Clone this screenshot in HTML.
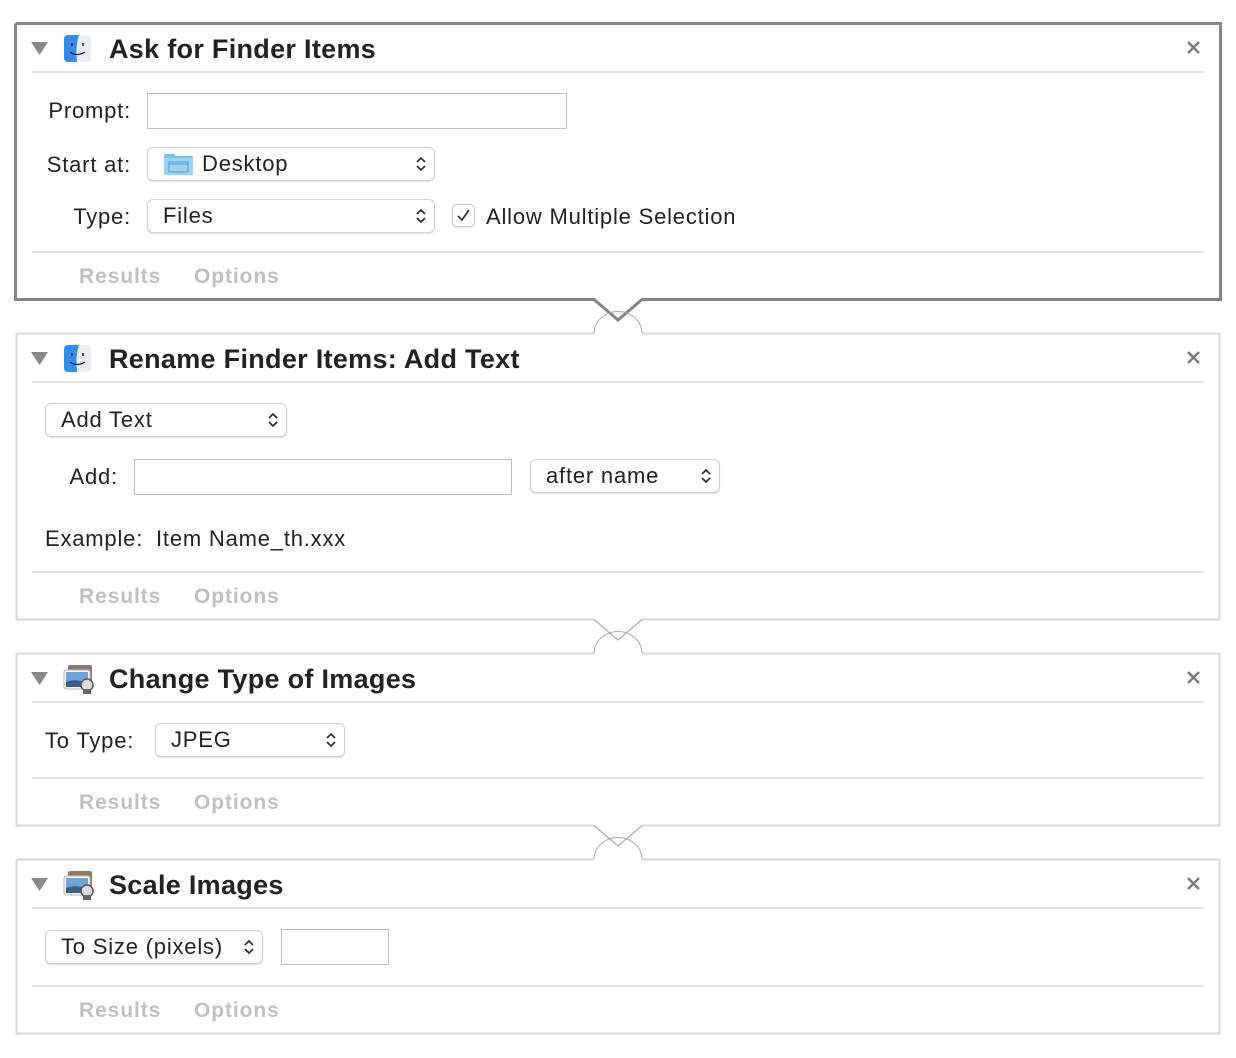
<!DOCTYPE html>
<html><head><meta charset="utf-8">
<style>
*{margin:0;padding:0;box-sizing:border-box}
body{width:1236px;height:1058px;background:#fff;position:relative;overflow:hidden;font-family:"Liberation Sans",Helvetica,Arial,sans-serif;color:#222}
.a{position:absolute;white-space:nowrap}
.t{font-size:27px;font-weight:bold;color:#222;line-height:30px;letter-spacing:0.3px}
.l{font-size:22px;line-height:26px;color:#222;letter-spacing:0.8px}
.r{text-align:right}
.dv{position:absolute;left:32px;width:1172px;height:2px;background:#e4e4e4}
.tb{position:absolute;border:1px solid #bdbdbd;background:#fff}
.pp{position:absolute;border:1px solid #cfcfcf;border-radius:6px;background:#fff;box-shadow:0 1px 1px rgba(0,0,0,.12);font-size:22px;letter-spacing:0.8px;color:#222}
.pp span{position:absolute;top:50%;transform:translateY(-50%)}
.pp svg{position:absolute;right:7px;top:50%;margin-top:-9px}
.ro{font-size:21px;font-weight:bold;color:#c0c0c0;line-height:26px;letter-spacing:0.9px}
</style></head><body>
<svg class="a" style="left:0;top:0" width="1236" height="1058">
<g fill="none">
<path d="M15.5 23.5 H1220.5 V299.5 H642 L618 320 L594 299.5 H15.5 V23.5" stroke="#858585" stroke-width="3"/>
<path d="M594 333.5 A24 22 0 0 1 642 333.5 M594 653.5 A24 22 0 0 1 642 653.5 M594 859.5 A24 22 0 0 1 642 859.5" stroke="#a8a8a8" stroke-width="1"/>
<g stroke="#d8d8d8" stroke-width="2">
<path d="M16.5 333.5 H594 M642 333.5 H1219.5 V619.5 H642 M594 619.5 H16.5 V333.5"/>
<path d="M16.5 653.5 H594 M642 653.5 H1219.5 V825.5 H642 M594 825.5 H16.5 V653.5"/>
<path d="M16.5 859.5 H594 M642 859.5 H1219.5 V1033.5 H16.5 V859.5"/>
</g>
<path d="M642 619.5 L618 640 L594 619.5 M642 825.5 L618 846 L594 825.5" stroke="#a8a8a8" stroke-width="1.2"/>
</g>
<g fill="#8a8a8a">
<path d="M31 42 H48 L39.5 55 Z"/>
<path d="M31 352 H48 L39.5 365 Z"/>
<path d="M31 672 H48 L39.5 685 Z"/>
<path d="M31 878 H48 L39.5 891 Z"/>
</g>
<defs><clipPath id="fc"><rect x="0" y="0" width="27" height="27" rx="4"/></clipPath></defs>
<g transform="translate(64,35)"><g clip-path="url(#fc)"><rect width="27" height="27" fill="#e9eef3"/><path d="M0 0 H15 Q11 12 13 27 H0 Z" fill="#2f8df0"/></g><path d="M8 8 V11 M19 8 V11" stroke="#222" stroke-width="1.5"/><path d="M6 17 Q13 22 21 17" stroke="#222" stroke-width="1.3" fill="none"/></g>
<g transform="translate(64,345)"><g clip-path="url(#fc)"><rect width="27" height="27" fill="#e9eef3"/><path d="M0 0 H15 Q11 12 13 27 H0 Z" fill="#2f8df0"/></g><path d="M8 8 V11 M19 8 V11" stroke="#222" stroke-width="1.5"/><path d="M6 17 Q13 22 21 17" stroke="#222" stroke-width="1.3" fill="none"/></g>
<g transform="translate(63,665)">
<rect x="5" y="0" width="24" height="19" rx="2" fill="#8a7a66"/><rect x="1" y="5" width="26" height="19" rx="2" fill="#f4f4f4" stroke="#bbb"/><rect x="3" y="7" width="22" height="15" fill="#6fa4d8"/><path d="M3 17 Q12 13 25 18 V22 H3Z" fill="#3b5f8a"/><circle cx="24" cy="20" r="6" fill="#ddd" stroke="#555" stroke-width="1.5"/><rect x="20" y="24" width="8" height="5" fill="#666"/>
</g>
<g transform="translate(63,871)">
<rect x="5" y="0" width="24" height="19" rx="2" fill="#8a7a66"/><rect x="1" y="5" width="26" height="19" rx="2" fill="#f4f4f4" stroke="#bbb"/><rect x="3" y="7" width="22" height="15" fill="#6fa4d8"/><path d="M3 17 Q12 13 25 18 V22 H3Z" fill="#3b5f8a"/><circle cx="24" cy="20" r="6" fill="#ddd" stroke="#555" stroke-width="1.5"/><rect x="20" y="24" width="8" height="5" fill="#666"/>
</g>
<g stroke="#7a7a7a" stroke-width="2.4">
<path d="M1188 42 L1199 53 M1199 42 L1188 53"/>
<path d="M1188 352 L1199 363 M1199 352 L1188 363"/>
<path d="M1188 672 L1199 683 M1199 672 L1188 683"/>
<path d="M1188 878 L1199 889 M1199 878 L1188 889"/>
</g>
</svg>

<div class="a t" style="left:109px;top:34px">Ask for Finder Items</div>
<div class="dv" style="top:71px"></div>
<div class="a l r" style="left:0;width:131px;top:98px">Prompt:</div>
<div class="tb" style="left:147px;top:93px;width:420px;height:36px"></div>
<div class="a l r" style="left:0;width:131px;top:152px">Start at:</div>
<div class="pp" style="left:147px;top:147px;width:288px;height:34px">
<svg style="position:absolute;left:15px;top:5px;margin:0" width="31" height="23"><path d="M1 3 Q1 1 3 1 H11 L13 3 H28 Q30 3 30 5 V21 Q30 22 28 22 H3 Q1 22 1 20 Z" fill="#7cc0ef"/><rect x="1" y="5" width="29" height="17" rx="1" fill="#9dd2f5"/><rect x="6" y="9" width="19" height="10" fill="none" stroke="#4f9bd6" stroke-width="1"/><path d="M6 11 H25" stroke="#4f9bd6"/></svg>
<span style="left:54px">Desktop</span>
<svg width="12" height="18"><path d="M2 7 L6 3 L10 7 M2 11 L6 15 L10 11" stroke="#333" stroke-width="1.8" fill="none"/></svg></div>
<div class="a l r" style="left:0;width:131px;top:204px">Type:</div>
<div class="pp" style="left:147px;top:199px;width:288px;height:34px"><span style="left:15px">Files</span>
<svg width="12" height="18"><path d="M2 7 L6 3 L10 7 M2 11 L6 15 L10 11" stroke="#333" stroke-width="1.8" fill="none"/></svg></div>
<div class="a" style="left:452px;top:204px;width:23px;height:23px;border:1px solid #c4c4c4;border-radius:5px;box-shadow:0 1px 1px rgba(0,0,0,.1)"><svg width="21" height="21"><path d="M5 11 L9 15 L16 5" stroke="#333" stroke-width="1.8" fill="none"/></svg></div>
<div class="a l" style="left:486px;top:204px">Allow Multiple Selection</div>
<div class="dv" style="top:251px"></div>
<div class="a ro" style="left:79px;top:264px">Results</div>
<div class="a ro" style="left:194px;top:264px">Options</div>

<div class="a t" style="left:109px;top:344px">Rename Finder Items: Add Text</div>
<div class="dv" style="top:381px"></div>
<div class="pp" style="left:45px;top:403px;width:242px;height:34px"><span style="left:15px">Add Text</span>
<svg width="12" height="18"><path d="M2 7 L6 3 L10 7 M2 11 L6 15 L10 11" stroke="#333" stroke-width="1.8" fill="none"/></svg></div>
<div class="a l r" style="left:0;width:118px;top:464px">Add:</div>
<div class="tb" style="left:134px;top:459px;width:378px;height:36px"></div>
<div class="pp" style="left:530px;top:459px;width:190px;height:34px"><span style="left:15px">after name</span>
<svg width="12" height="18"><path d="M2 7 L6 3 L10 7 M2 11 L6 15 L10 11" stroke="#333" stroke-width="1.8" fill="none"/></svg></div>
<div class="a l" style="left:45px;top:526px">Example:</div>
<div class="a l" style="left:156px;top:526px">Item Name_th.xxx</div>
<div class="dv" style="top:571px"></div>
<div class="a ro" style="left:79px;top:584px">Results</div>
<div class="a ro" style="left:194px;top:584px">Options</div>

<div class="a t" style="left:109px;top:664px">Change Type of Images</div>
<div class="dv" style="top:701px"></div>
<div class="a l" style="left:45px;top:728px">To Type:</div>
<div class="pp" style="left:155px;top:723px;width:190px;height:34px"><span style="left:15px">JPEG</span>
<svg width="12" height="18"><path d="M2 7 L6 3 L10 7 M2 11 L6 15 L10 11" stroke="#333" stroke-width="1.8" fill="none"/></svg></div>
<div class="dv" style="top:777px"></div>
<div class="a ro" style="left:79px;top:790px">Results</div>
<div class="a ro" style="left:194px;top:790px">Options</div>

<div class="a t" style="left:109px;top:870px">Scale Images</div>
<div class="dv" style="top:907px"></div>
<div class="pp" style="left:45px;top:930px;width:218px;height:34px"><span style="left:15px">To Size (pixels)</span>
<svg width="12" height="18"><path d="M2 7 L6 3 L10 7 M2 11 L6 15 L10 11" stroke="#333" stroke-width="1.8" fill="none"/></svg></div>
<div class="tb" style="left:281px;top:929px;width:108px;height:36px"></div>
<div class="dv" style="top:985px"></div>
<div class="a ro" style="left:79px;top:998px">Results</div>
<div class="a ro" style="left:194px;top:998px">Options</div>
</body></html>
